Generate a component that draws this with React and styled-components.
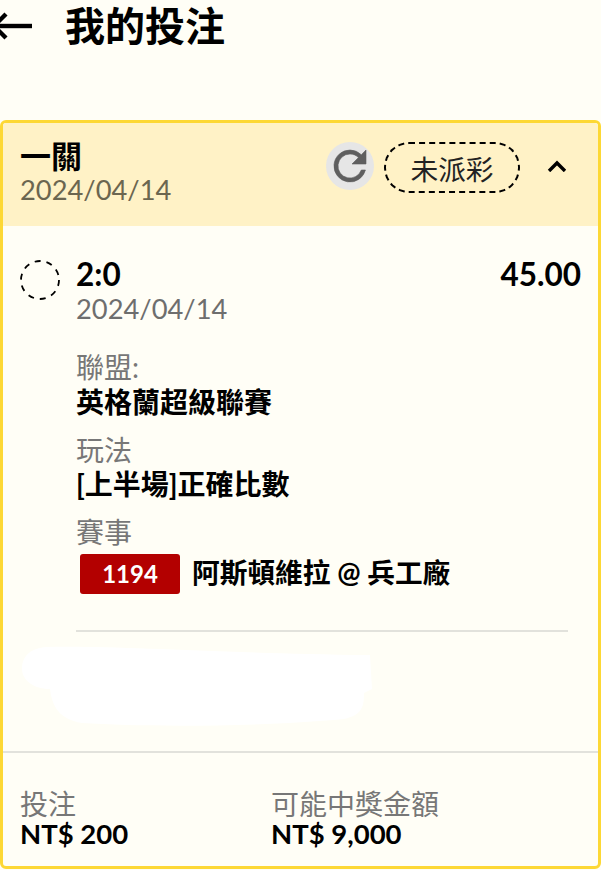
import styled, { createGlobalStyle } from 'styled-components';

const GlobalStyle = createGlobalStyle`
    html, body {
        margin: 0;
        padding: 0;
        background: #fffef6;
    }
    body {
        font-family: Lato, "Noto Sans CJK TC", sans-serif;
        color: #000;
        overflow: hidden;
    }
`;

const Page = styled.div`
    width: 601px;
    height: 870px;
    box-sizing: border-box;
    padding-top: 120px;
    position: relative;
    overflow: hidden;
`;

const TopBar = styled.div`
    position: absolute;
    top: 0;
    left: 0;
    height: 52px;
    display: flex;
    align-items: center;
`;

const BackIcon = styled.svg`
    width: 34px;
    height: 40px;
    margin-right: 31px;
    flex: none;
`;

const Title = styled.h1`
    margin: 0;
    font-size: 40px;
    line-height: 52px;
    font-weight: 700;
`;

const Card = styled.div`
    height: 749px;
    box-sizing: border-box;
    border: 3px solid #fdd835;
    border-radius: 6px;
    display: flex;
    flex-direction: column;
    overflow: hidden;
`;

const CardHeader = styled.div`
    height: 103px;
    flex: none;
    box-sizing: border-box;
    background: #fff2c6;
    padding: 16px 31px 0 17px;
    display: flex;
    justify-content: space-between;
    align-items: flex-start;
`;

const Stack = styled.div`
    display: flex;
    flex-direction: column;
`;

const HeaderTitle = styled.div`
    font-size: 31px;
    line-height: 35px;
    font-weight: 700;
`;

const HeaderDate = styled.div`
    font-size: 27.3px;
    line-height: 32px;
    color: #6b6650;
`;

const HeaderActions = styled.div`
    display: flex;
    align-items: flex-start;
    margin-top: 3px;
`;

const RefreshButton = styled.div`
    width: 48px;
    height: 48px;
    border-radius: 50%;
    background: #e6e6e6;
    display: flex;
    align-items: center;
    justify-content: center;
    margin-right: 10px;
`;

const StatusPill = styled.div`
    width: 136px;
    height: 51px;
    box-sizing: border-box;
    border: 2px dashed #000;
    border-radius: 25px;
    display: flex;
    align-items: center;
    justify-content: center;
    font-size: 27.7px;
    color: #222;
`;

const Chevron = styled.svg`
    width: 20px;
    height: 12px;
    margin-left: 27px;
    margin-top: 18px;
`;

const CardBody = styled.div`
    flex: 1;
    padding: 31px 17px 0;
    display: flex;
    flex-direction: column;
`;

const BetRow = styled.div`
    display: flex;
    align-items: flex-start;
`;

const DashedCircle = styled.svg`
    width: 40px;
    height: 40px;
    margin-top: 3px;
    margin-right: 16px;
    flex: none;
`;

const BetMain = styled.div`
    flex: 1;
`;

const BetScore = styled.div`
    font-size: 31.5px;
    line-height: 34px;
    font-weight: 700;
`;

const BetDate = styled.div`
    font-size: 27.3px;
    line-height: 32px;
    margin-top: 2px;
    color: #6e6e6e;
`;

const Odds = styled.div`
    font-size: 31.5px;
    line-height: 34px;
    font-weight: 700;
`;

const Details = styled.div`
    margin-left: 56px;
    margin-right: 13px;
    padding-top: 25px;
`;

const Field = styled.div`
    margin-bottom: 13.5px;
`;

const FieldLabel = styled.div`
    font-size: 28px;
    line-height: 34.5px;
    color: #777;
`;

const FieldValue = styled.div`
    font-size: 28px;
    line-height: 34.5px;
    font-weight: 700;
`;

const MatchRow = styled.div`
    display: flex;
    align-items: center;
    margin-left: 4px;
    margin-top: 4px;
`;

const MatchId = styled.div`
    width: 100px;
    height: 40px;
    border-radius: 3px;
    background: #b30000;
    color: #fff;
    font-size: 24px;
    font-weight: 700;
    display: flex;
    align-items: center;
    justify-content: center;
    margin-right: 12px;
`;

const MatchName = styled.div`
    font-size: 27.7px;
    line-height: 34.5px;
    font-weight: 700;
`;

const Divider = styled.div`
    height: 2px;
    background: #e2e2dc;
    margin-top: 36px;
`;

const Redaction = styled.svg`
    display: block;
    width: 360px;
    height: 84px;
    margin-top: 13px;
    margin-left: 2px;
    flex: none;
`;

const CardFooter = styled.div`
    flex: none;
    height: 115px;
    box-sizing: border-box;
    border-top: 2px solid #e2e2dc;
    padding: 36px 17px 0;
    display: grid;
    grid-template-columns: 251px 1fr;
`;

const FooterLabel = styled.div`
    font-size: 28px;
    line-height: 30px;
    color: #777;
`;

const FooterValue = styled.div`
    font-size: 27.5px;
    line-height: 29px;
    font-weight: 700;
`;

export default function App() {
    return (
        <Page>
            <GlobalStyle />
            <TopBar>
                <BackIcon viewBox="0 0 34 40" fill="none" stroke="#000" strokeWidth="4.4">
                    <path d="M0 20 H32" />
                    <path d="M6 8 L-6 20 L6 32" />
                </BackIcon>
                <Title>我的投注</Title>
            </TopBar>
            <Card>
                <CardHeader>
                    <Stack>
                        <HeaderTitle>一關</HeaderTitle>
                        <HeaderDate>2024/04/14</HeaderDate>
                    </Stack>
                    <HeaderActions>
                        <RefreshButton>
                            <svg width="48" height="48" viewBox="0 0 24 24" fill="#5f5f5f" stroke="#5f5f5f" strokeWidth="0.3">
                                <path d="M17.65 6.35A7.96 7.96 0 0 0 12 4a8 8 0 1 0 7.73 10h-2.08A6 6 0 1 1 12 6c1.66 0 3.14.69 4.22 1.78L13 11h7V4l-2.35 2.35z" />
                            </svg>
                        </RefreshButton>
                        <StatusPill>未派彩</StatusPill>
                        <Chevron viewBox="0 0 20 12" fill="none" stroke="#000" strokeWidth="3.4">
                            <path d="M2 11 L10 3 L18 11" />
                        </Chevron>
                    </HeaderActions>
                </CardHeader>
                <CardBody>
                    <BetRow>
                        <DashedCircle viewBox="0 0 40 40" fill="none" stroke="#000" strokeWidth="1.8">
                            <circle cx="20" cy="20" r="19" strokeDasharray="6 5.94" />
                        </DashedCircle>
                        <BetMain>
                            <BetScore>2:0</BetScore>
                            <BetDate>2024/04/14</BetDate>
                        </BetMain>
                        <Odds>45.00</Odds>
                    </BetRow>
                    <Details>
                        <Field>
                            <FieldLabel>聯盟:</FieldLabel>
                            <FieldValue>英格蘭超級聯賽</FieldValue>
                        </Field>
                        <Field>
                            <FieldLabel>玩法</FieldLabel>
                            <FieldValue>[上半場]正確比數</FieldValue>
                        </Field>
                        <FieldLabel>賽事</FieldLabel>
                        <MatchRow>
                            <MatchId>1194</MatchId>
                            <MatchName>阿斯頓維拉 @ 兵工廠</MatchName>
                        </MatchRow>
                        <Divider />
                    </Details>
                    <Redaction viewBox="0 0 360 84">
                        <path
                            fill="#fff"
                            d="M24 2 C90 0 190 8 348 10 L350 44 L342 48 C342 62 340 70 322 74 C240 82 120 82 60 78 C36 74 30 60 28 44 C10 44 0 34 0 24 C0 10 10 3 24 2 Z"
                        />
                    </Redaction>
                </CardBody>
                <CardFooter>
                    <Stack>
                        <FooterLabel>投注</FooterLabel>
                        <FooterValue>NT$ 200</FooterValue>
                    </Stack>
                    <Stack>
                        <FooterLabel>可能中獎金額</FooterLabel>
                        <FooterValue>NT$ 9,000</FooterValue>
                    </Stack>
                </CardFooter>
            </Card>
        </Page>
    );
}
